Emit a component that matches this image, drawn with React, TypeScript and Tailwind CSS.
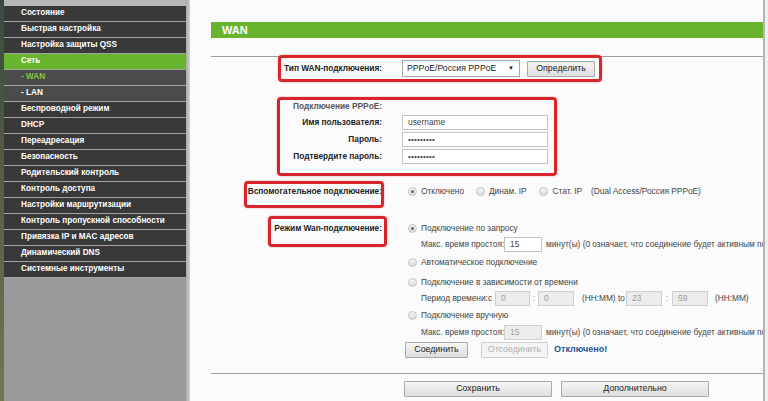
import React from "react";

type Item = { label: string; kind?: "active" | "sub" | "subActive" };

const items: Item[] = [
  { label: "Состояние" },
  { label: "Быстрая настройка" },
  { label: "Настройка защиты QSS" },
  { label: "Сеть", kind: "active" },
  { label: "- WAN", kind: "subActive" },
  { label: "- LAN", kind: "sub" },
  { label: "Беспроводной режим" },
  { label: "DHCP" },
  { label: "Переадресация" },
  { label: "Безопасность" },
  { label: "Родительский контроль" },
  { label: "Контроль доступа" },
  { label: "Настройки маршрутизации" },
  { label: "Контроль пропускной способности" },
  { label: "Привязка IP и MAC адресов" },
  { label: "Динамический DNS" },
  { label: "Системные инструменты" },
];

function Radio({ checked }: { checked?: boolean }) {
  return (
    <span className="flex h-[9px] w-[9px] shrink-0 items-center justify-center rounded-full border border-[#c4c4c4] bg-gradient-to-b from-[#f4f4f4] to-[#dcdcdc]">
      {checked && <span className="h-[3px] w-[3px] rounded-full bg-[#6a6a6a]" />}
    </span>
  );
}

function TextBox({
  value,
  w,
  disabled,
  dots,
}: {
  value: string;
  w: string;
  disabled?: boolean;
  dots?: boolean;
}) {
  return (
    <span
      className={`flex h-[15px] shrink-0 items-center border px-[5px] ${w} ${
        disabled ? "border-[#cfcfcf] bg-[#ececec] text-[#a0a0a0]" : "border-[#c2c2c2] bg-white text-[#444]"
      } ${dots ? "text-[8px] tracking-[0.2px]" : "text-[8.4px]"}`}
    >
      {value}
    </span>
  );
}

function Btn({ children, w, disabled }: { children: React.ReactNode; w: string; disabled?: boolean }) {
  return (
    <span
      className={`flex h-[16px] items-center justify-center rounded-[1px] border text-[8.8px] ${w} ${
        disabled
          ? "border-[#d0d0d0] bg-[#f4f4f4] text-[#b0b0b0]"
          : "border-[#a9a9a9] bg-gradient-to-b from-[#f6f6f6] to-[#dedede] text-[#222]"
      }`}
    >
      {children}
    </span>
  );
}

function Row({
  label,
  labelClass = "font-bold text-[#222]",
  h = "h-[16px]",
  mt = "",
  children,
}: {
  label?: string;
  labelClass?: string;
  h?: string;
  mt?: string;
  children?: React.ReactNode;
}) {
  return (
    <div className={`flex items-center ${h} ${mt}`}>
      <div className={`w-[171px] shrink-0 text-right text-[8.3px] ${labelClass}`}>{label}</div>
      <div className="ml-[20px] flex items-center">{children}</div>
    </div>
  );
}

function RedBox({ cls }: { cls: string }) {
  return (
    <div
      className={`pointer-events-none absolute rounded-[4px] border-[3px] border-[#d8252c] shadow-[0_0_2px_rgba(200,0,0,0.4)] ${cls}`}
    />
  );
}

export default function App() {
  return (
    <div className="flex h-[401px] w-[768px] overflow-hidden bg-white font-['Liberation_Sans',Arial,sans-serif]">
      <div className="w-[4px] shrink-0 bg-gradient-to-b from-[#3c4a3e] via-[#56614a] to-[#6d7a4c]" />
      <aside className="flex w-[182px] shrink-0 flex-col bg-[#9a9a9a]">
        <div className="h-[6px] bg-[#b7b7b7]" />
        {items.map((it) => {
          const bg =
            it.kind === "active"
              ? "bg-[#69b42f] text-white"
              : it.kind === "subActive"
              ? "bg-[#4b4b4b] text-[#8cc63f]"
              : it.kind === "sub"
              ? "bg-[#4b4b4b] text-white"
              : "bg-[#393939] text-white";
          return (
            <div
              key={it.label}
              className={`flex h-[16px] items-center border-b border-[#a3a3a3] pl-[17px] text-[8.2px] font-bold ${bg}`}
            >
              {it.label}
            </div>
          );
        })}
        <div className="flex-1" />
      </aside>
      <div className="w-[4px] shrink-0 bg-gradient-to-r from-[#a9a9a9] to-[#d2d2d2]" />

      <main className="relative min-w-0 flex-1 overflow-hidden whitespace-nowrap bg-[#fbfbfb] pl-[21px] pt-[22px] text-[8.3px] text-[#444]">
        <div className="flex h-[16px] items-center bg-[#68b42f] pl-[11px] text-[11px] font-bold text-white">
          WAN
        </div>
        <div className="mt-[18px] h-[1px] bg-[#9e9e9e]" />

        <Row label="Тип WAN-подключения:" h="h-[17px]" mt="mt-[3px]">
          <span className="flex h-[17px] w-[118px] items-center justify-between border border-[#a7a7a7] bg-white pl-[4px] pr-[5px] text-[8.7px] text-[#222]">
            <span>PPPoE/Россия PPPoE</span>
            <span className="text-[6px]">▼</span>
          </span>
          <span className="ml-[7px]">
            <Btn w="w-[68px]">Определить</Btn>
          </span>
        </Row>

        <Row label="Подключение PPPoE:" labelClass="font-bold text-[#555]" mt="mt-[21px]" />
        <Row label="Имя пользователя:" h="h-[17px]">
          <TextBox value="username" w="w-[146px]" />
        </Row>
        <Row label="Пароль:" h="h-[17px]">
          <TextBox value="•••••••••" w="w-[146px]" dots />
        </Row>
        <Row label="Подтвердите пароль:" h="h-[17px]">
          <TextBox value="•••••••••" w="w-[146px]" dots />
        </Row>

        <Row label="Вспомогательное подключение:" mt="mt-[18px]">
          <span className="ml-[6px] flex items-center gap-[4px]">
            <Radio checked />
            <span>Отключено</span>
          </span>
          <span className="ml-[12px] flex items-center gap-[4px]">
            <Radio />
            <span>Динам. IP</span>
          </span>
          <span className="ml-[12px] flex items-center gap-[5px]">
            <Radio />
            <span>Стат. IP</span>
          </span>
          <span className="ml-[9px]">(Dual Access/Россия PPPoE)</span>
        </Row>

        <Row label="Режим Wan-подключение:" mt="mt-[21px]">
          <span className="ml-[6px] flex items-center gap-[4px]">
            <Radio checked />
            <span>Подключение по запросу</span>
          </span>
        </Row>
        <Row>
          <span className="ml-[19px] w-[83px] shrink-0">Макс. время простоя:</span>
          <TextBox value="15" w="w-[38px]" />
          <span className="ml-[4px]">минут(ы) (0 означает, что соединение будет активным постоянно)</span>
        </Row>
        <Row mt="mt-[2px]">
          <span className="ml-[6px] flex items-center gap-[4px]">
            <Radio />
            <span>Автоматическое подключение</span>
          </span>
        </Row>
        <Row mt="mt-[4px]">
          <span className="ml-[6px] flex items-center gap-[4px]">
            <Radio />
            <span>Подключение в зависимости от времени</span>
          </span>
        </Row>
        <Row>
          <span className="ml-[19px] w-[74px] shrink-0">Период времени:с</span>
          <TextBox value="0" w="w-[35px]" disabled />
          <span className="w-[8px] text-center text-[#999]">:</span>
          <TextBox value="0" w="w-[36px]" disabled />
          <span className="ml-[8px] w-[44px] shrink-0">(HH:MM) to</span>
          <TextBox value="23" w="w-[36px]" disabled />
          <span className="w-[10px] text-center text-[#999]">:</span>
          <TextBox value="59" w="w-[36px]" disabled />
          <span className="ml-[7px]">(HH:MM)</span>
        </Row>
        <Row mt="mt-[1px]">
          <span className="ml-[6px] flex items-center gap-[4px]">
            <Radio />
            <span>Подключение вручную</span>
          </span>
        </Row>
        <Row mt="mt-[1px]">
          <span className="ml-[19px] w-[83px] shrink-0">Макс. время простоя:</span>
          <TextBox value="15" w="w-[38px]" disabled />
          <span className="ml-[4px]">минут(ы) (0 означает, что соединение будет активным постоянно)</span>
        </Row>
        <Row h="h-[17px]" mt="mt-[1px]">
          <span className="ml-[3px]">
            <Btn w="w-[63px]">Соединить</Btn>
          </span>
          <span className="ml-[13px]">
            <Btn w="w-[67px]" disabled>
              Отсоединить
            </Btn>
          </span>
          <span className="ml-[6px] text-[9px] font-bold text-[#23539a]">Отключено!</span>
        </Row>

        <div className="mt-[15px] h-[1px] bg-[#a0a0a0]" />
        <Row mt="mt-[7px]">
          <span className="ml-[2px]">
            <Btn w="w-[148px]">Сохранить</Btn>
          </span>
          <span className="ml-[9px]">
            <Btn w="w-[148px]">Дополнительно</Btn>
          </span>
        </Row>

        <RedBox cls="left-[88px] top-[55px] h-[27px] w-[324px]" />
        <RedBox cls="left-[87px] top-[97px] h-[79px] w-[280px]" />
        <RedBox cls="left-[54px] top-[181px] h-[27px] w-[140px]" />
        <RedBox cls="left-[78px] top-[216px] h-[31px] w-[119px]" />
      </main>
      <div className="w-[2px] shrink-0 bg-[#b4b4b4]" />
      <div className="w-[3px] shrink-0 bg-[#efefef]" />
    </div>
  );
}
